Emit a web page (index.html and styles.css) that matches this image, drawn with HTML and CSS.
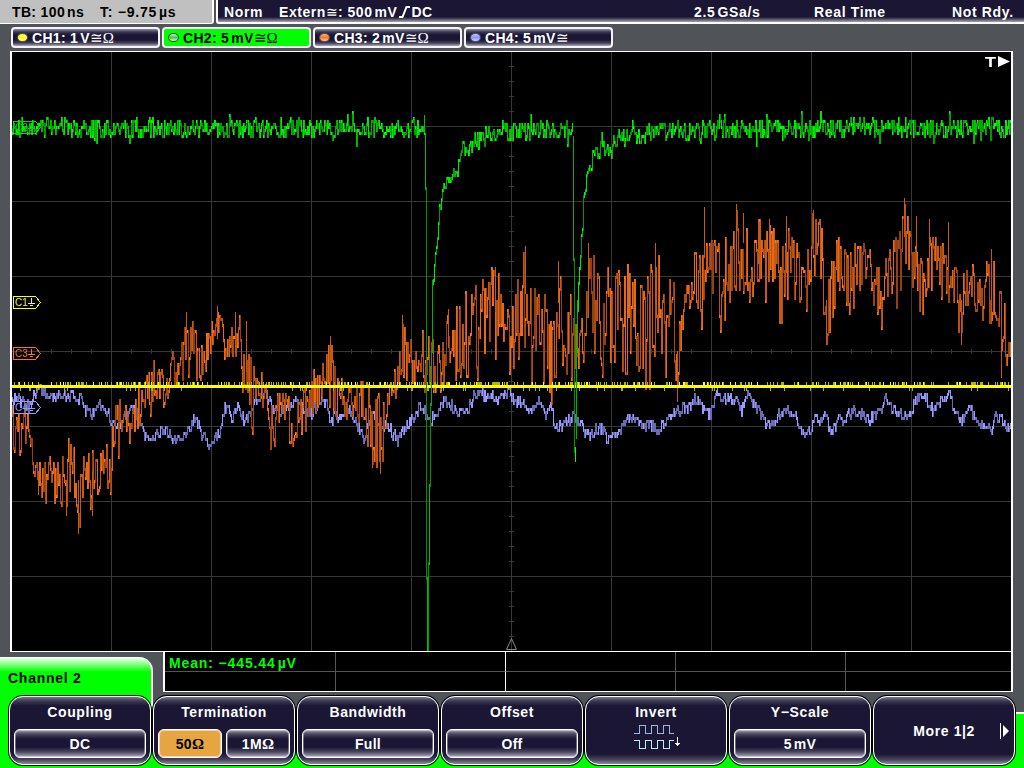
FILE: index.html
```html
<!DOCTYPE html>
<html lang="en">

<head>
  <meta charset="UTF-8">
  <meta name="viewport" content="width=device-width, initial-scale=1.0">
  <title>Oscilloscope</title>
  <link rel="stylesheet" href="styles.css">
</head>

<body>
  <div class="screen">
    <header class="topbar">
      <div class="timebase">
        <span>TB: 100<i></i>ns</span>
        <span>T: −9.75<i></i>µs</span>
      </div>
      <div class="status">
        <span>Norm</span>
        <span class="extern">Extern<b class="sym">≅</b>: 500<i></i>mV<svg class="edge" width="13" height="12" viewBox="0 0 13 12"><path d="M1 11H4.500L8.500 1H12" /></svg>DC</span>
        <span>2.5<i></i>GSa/s</span>
        <span>Real Time</span>
        <span class="state">Not Rdy.</span>
      </div>
    </header>

    <div class="channels">
      <div class="chip ch1"><em></em>CH1: 1<i></i>V<b class="sym">≅Ω</b></div>
      <div class="chip ch2 active"><em></em>CH2: 5<i></i>mV<b class="sym">≅Ω</b></div>
      <div class="chip ch3"><em></em>CH3: 2<i></i>mV<b class="sym">≅Ω</b></div>
      <div class="chip ch4"><em></em>CH4: 5<i></i>mV<b class="sym">≅</b></div>
    </div>

    <main class="plot">
      <canvas id="scope" width="999" height="599"></canvas>
      <svg class="markers" width="999" height="599" viewBox="12 52 999 599">
        <g class="marker yellow">
          <path d="M13.500 296.500H35.500L40.500 302.500L35.500 308.500H13.500Z" />
          <text x="15" y="306">C1</text>
          <path d="M31.500 298V303M28 303.500H35M30 305.500H33" />
        </g>
        <g class="marker green">
          <path d="M13.500 121.500H35.500L40.500 127.500L35.500 133.500H13.500Z" />
          <text x="15" y="131">C2</text>
          <path d="M31.500 123V128M28 128.500H35M30 130.500H33" />
        </g>
        <g class="marker orange">
          <path d="M13.500 347.500H35.500L40.500 353.500L35.500 359.500H13.500Z" />
          <text x="15" y="357">C3</text>
          <path d="M31.500 349V354M28 354.500H35M30 356.500H33" />
        </g>
        <g class="marker violet">
          <path d="M13.500 401.500H35.500L40.500 407.500L35.500 413.500H13.500Z" />
          <text x="15" y="411">C4</text>
          <path d="M31.500 403V408M28 408.500H35M30 410.500H33" />
        </g>
        <path class="trigger-pos" d="M511.500 638.500L506.500 649.500H516.500Z" />
        <text class="trigger-t" x="985" y="67" textLength="11" lengthAdjust="spacingAndGlyphs">T</text>
        <path class="trigger-arrow" d="M998 56L1010 61.500L998 67Z" />
      </svg>
    </main>

    <section class="bottom">
      <div class="readout">
        <div class="tab">Channel 2</div>
        <div class="measure">
          <div class="value">Mean: −445.44<i></i>µV</div>
          <div></div>
          <div></div>
          <div></div>
          <div></div>
          <div></div>
          <div></div>
          <div></div>
          <div></div>
          <div></div>
        </div>
      </div>
      <nav class="menu">
        <div class="key">
          <h2>Coupling</h2>
          <div class="fields"><span>DC</span></div>
        </div>
        <div class="key">
          <h2>Termination</h2>
          <div class="fields"><span class="on">50<b class="ohm">Ω</b></span><span>1M<b class="ohm">Ω</b></span></div>
        </div>
        <div class="key">
          <h2>Bandwidth</h2>
          <div class="fields"><span>Full</span></div>
        </div>
        <div class="key">
          <h2>Offset</h2>
          <div class="fields"><span>Off</span></div>
        </div>
        <div class="key">
          <h2>Invert</h2>
          <svg class="invert" width="48" height="26" viewBox="0 0 48 26">
            <path class="up" d="M0 9.500H5.500V1.500H11.500V9.500H17.500V1.500H23.500V9.500H29.500V1.500H35.500V9.500H40" />
            <path class="down" d="M0 16.500H5.500V24.500H11.500V16.500H17.500V24.500H23.500V16.500H29.500V24.500H35.500V16.500H40" />
            <path class="arrow" d="M43.500 13V22M41 19.500H46M42 20.500H45" />
          </svg>
        </div>
        <div class="key">
          <h2>Y−Scale</h2>
          <div class="fields"><span>5<i></i>mV</span></div>
        </div>
        <div class="key more">
          <h2>More 1|2</h2>
          <svg width="10" height="16" viewBox="0 0 10 16"><path d="M0 0H1V16H0ZM3 2L9 8L3 14Z" /></svg>
        </div>
      </nav>
    </section>
  </div>

  <script src="scope.js"></script>
</body>

</html>
```
FILE: styles.css
```css
* {
  box-sizing: border-box;
}

body {
  margin: 0;
  background-color: #505458;
  font-family: "Liberation Sans", Arial, sans-serif;
  font-size: 14px;
  font-weight: bold;
  letter-spacing: 0.5px;
  color: white;
}

.screen {
  width: 1024px;
  height: 768px;
  overflow: hidden;
  background-color: #505458;
}

/* thin space between number and unit */
i {
  display: inline-block;
  width: 2px;
}

.topbar {
  display: flex;
  gap: 2px;
  height: 24px;
  line-height: 24px;
  white-space: nowrap;
}

.timebase {
  display: flex;
  width: 214px;
  padding-left: 12px;
  letter-spacing: 0.35px;
  color: black;
  background-color: #c0c0c0;
  border-right: 2px solid white;
  border-bottom: 1px solid white;
  border-bottom-right-radius: 3px;
}

.timebase span:first-child {
  width: 88px;
}

.timebase span:last-child {
  letter-spacing: 0.75px;
}

.status {
  flex: 1;
  display: grid;
  grid-template-columns: 55px 415px 120px 138px 64px;
  padding-left: 6px;
  border-left: 2px solid white;
  border-bottom: 2px solid white;
  border-bottom-left-radius: 3px;
  background: linear-gradient(#1a1633 17px, #4c4960 19px, #aaa8b4 22px);
}

.status span {
  letter-spacing: 0.65px;
}

.status .extern {
  letter-spacing: 0.55px;
}

.sym {
  font-weight: normal;
  font-family: "Liberation Serif", "DejaVu Serif", serif;
  font-size: 15px;
  letter-spacing: 0;
}

.extern .sym {
  font-size: 14px;
  line-height: 1;
}

.edge {
  margin-left: 1px;
  vertical-align: -1px;
  fill: none;
  stroke: white;
  stroke-width: 2;
}

.channels {
  display: flex;
  gap: 2px;
  height: 27px;
  padding: 3px 0 0 11px;
}

.chip {
  display: flex;
  align-items: center;
  width: 149px;
  height: 21px;
  padding-left: 4px;
  border: 2px solid #f4f4f8;
  border-radius: 4px;
  letter-spacing: 0.3px;
  white-space: pre;
  background: linear-gradient(#8f8da0, #3a3752 3px, #1a1633 6px, #1a1633 11px, #444158 14px, #aaa8b8);
}

.chip.active {
  color: black;
  background: #00ff00;
}

.chip em {
  width: 11px;
  height: 9px;
  margin-right: 4px;
  border: 1px solid #55536a;
  border-radius: 50%;
}

.ch1 em {
  background: linear-gradient(#ffff60, #ffff00, #ffffa0);
}

.ch2 em {
  border-color: #205820;
  background: linear-gradient(#d0f0d0, #50c050, #e0f8e0);
}

.ch3 em {
  background: linear-gradient(#ffb080, #ff7518, #ffc8a0);
}

.ch4 em {
  background: linear-gradient(#c8c8ff, #9090ff, #d0d0ff);
}

.plot {
  position: relative;
  width: 1003px;
  height: 601px;
  margin-left: 10px;
  border: 1px solid white;
  border-width: 1px 2px;
  background-color: black;
}

.plot canvas {
  display: block;
}

.markers {
  position: absolute;
  left: 0;
  top: 0;
}

.marker path {
  fill: none;
  shape-rendering: crispEdges;
}

.marker text {
  font-size: 10px;
  font-weight: normal;
  letter-spacing: 0;
}

.yellow {
  stroke: #ffff00;
}

.green {
  stroke: #00e000;
}

.orange {
  stroke: #ff7518;
}

.violet {
  stroke: #9898ff;
}

.marker text {
  stroke: none;
}

.yellow text {
  fill: #ffff00;
}

.green text {
  fill: #00e000;
}

.orange text {
  fill: #ff7518;
}

.violet text {
  fill: #9898ff;
}

.trigger-pos {
  fill: none;
  stroke: #888;
}

.trigger-t {
  font-size: 15px;
  letter-spacing: 0;
  fill: white;
}

.trigger-arrow {
  fill: white;
}

.bottom {
  height: 116px;
  background: linear-gradient(#505458 60px, white 60px, white 62px, #00ff00 62px);
}

.readout {
  display: flex;
  height: 40px;
}

.tab {
  width: 153px;
  height: 57px;
  margin: 5px 10px 0 0;
  padding: 13px 0 0 8px;
  letter-spacing: 0.75px;
  color: black;
  background: linear-gradient(white, #00ff00 15px);
  border-right: 2px solid white;
  border-top-right-radius: 14px;
}

.measure {
  display: grid;
  grid-template-columns: 171px 170px 170px 170px 1fr;
  grid-template-rows: 20px 19px;
  width: 850px;
  border: 0 solid white;
  border-width: 0 2px 1px;
  background-color: black;
}

.measure div {
  border-right: 1px solid #555;
}

.measure div:nth-child(-n + 5) {
  border-bottom: 1px solid #555;
}

.measure div:nth-child(5n + 2) {
  border-right-color: white;
}

.measure div:nth-child(5n) {
  border-right: none;
}

.measure .value {
  padding: 3px 0 0 4px;
  letter-spacing: 0.87px;
  color: #00ff00;
  white-space: nowrap;
}

.menu {
  display: flex;
  gap: 2px;
  padding: 4px 0 0 9px;
}

.key {
  display: flex;
  flex-direction: column;
  align-items: center;
  width: 142px;
  height: 69px;
  padding: 7px 4px 0;
  border: 1px solid white;
  border-radius: 14px;
  box-shadow: 0 0 0 1px black;
  background: linear-gradient(#77758a, #3c3a52 4px, #1a1633 9px, #1a1633 57px, #4a4860 63px, #8c8a9c);
}

.key h2 {
  margin: 0;
  font-size: 14px;
  line-height: 17px;
  letter-spacing: 0.6px;
}

.fields {
  display: flex;
  gap: 4px;
  align-self: stretch;
  margin-top: 8px;
}

.fields span {
  flex: 1;
  height: 29px;
  line-height: 29px;
  text-align: center;
  letter-spacing: 0.3px;
  border: 1px solid white;
  border-radius: 6px;
  box-shadow: inset 0 0 0 1px rgba(255, 255, 255, 0.35);
  background: linear-gradient(#a5a3b2, #4a4760 4px, #1a1633 9px, #1a1633 17px, #4a4760 22px, #b0aebc);
}

.fields .on {
  color: black;
  background: #e6a540;
  box-shadow: inset 0 0 0 1px #f4d4a4;
}

.ohm {
  font-family: "Liberation Serif", serif;
  font-size: 15px;
  line-height: 1;
}

.invert {
  margin-top: 3px;
  margin-left: 4px;
  fill: none;
  shape-rendering: crispEdges;
}

.up {
  stroke: #9cb4e8;
}

.down {
  stroke: #b8ecff;
}

.arrow {
  stroke: white;
}

.more {
  flex-direction: row;
  justify-content: flex-end;
  padding-top: 1px;
}

.more h2 {
  margin-right: 25px;
  letter-spacing: 0.6px;
}

.more svg {
  fill: white;
}
```
FILE: scope.js
```js
const ctx = document.getElementById('scope').getContext('2d');
// work in screen coordinates, plot starts at 12,52
ctx.translate(-12, -52);

let seed = 4711;
function rnd() {
  seed = (seed * 1103515245 + 12345) % 2147483648;
  return (seed >> 8) / 8388608;
}

// x, y pairs
const violet = [12,397,20,400,25,407,30,403,35,391,40,388,46,393,55,397,65,394,72,395,80,397,84,408,90,413,
  97,405,103,403,108,413,115,428,120,425,125,413,132,406,137,412,142,431,147,440,155,435,160,428,167,431,
  173,440,180,440,187,430,195,416,200,430,208,443,214,438,220,430,223,408,228,410,232,417,237,405,243,419,
  248,417,255,400,262,390,268,397,272,408,283,410,290,407,297,395,302,406,310,412,318,403,325,400,331,422,
  334,410,340,418,347,405,355,420,363,436,372,415,380,423,388,425,397,440,405,427,412,418,420,405,430,418,
  436,415,440,400,448,400,455,410,467,409,472,396,480,390,485,396,490,392,495,402,502,395,508,391,515,400,
  522,400,530,410,538,398,545,412,550,408,556,427,565,423,573,413,580,425,587,434,597,427,603,430,607,437,
  617,435,624,420,633,415,640,425,650,424,658,431,667,414,672,412,680,408,690,405,694,397,702,407,710,412,
  716,393,725,398,735,400,741,410,747,395,755,405,765,420,772,424,778,413,785,407,795,416,803,432,810,430,
  814,415,820,420,825,415,830,430,838,419,845,418,852,410,860,412,866,419,875,413,880,408,885,392,892,408,
  900,412,908,415,915,396,925,395,933,410,940,398,948,394,955,410,960,420,968,410,975,413,982,425,990,430,
  995,415,1002,420,1011,427];

// x, upper limit, lower limit
const orange = [12,390,443,18,415,465,23,390,440,30,430,450,36,445,490,43,440,510,50,450,490,57,460,505,
  63,440,510,70,440,495,78,470,530,85,440,480,92,450,515,98,445,490,110,440,490,112,405,440,118,400,455,
  123,400,420,129,410,455,137,385,430,142,385,410,150,370,430,153,350,390,157,365,395,163,362,405,
  171,350,385,177,360,385,187,315,370,195,325,375,203,340,375,210,325,350,218,308,335,226,335,360,
  236,312,360,242,320,385,247,345,390,252,350,430,258,375,405,267,365,425,271,400,450,280,390,425,
  293,400,445,305,380,430,313,370,430,320,370,415,330,340,410,340,375,415,350,385,430,365,380,430,
  372,390,465,380,390,470,388,385,420,395,370,395,402,315,370,408,340,385,417,330,385,432,340,390,
  448,310,380,460,300,375,475,290,375,490,270,355,495,268,355,505,300,355,511,310,390,525,245,340,
  530,280,385,535,278,360,545,290,380,553,320,405,558,262,355,563,300,395,570,290,375,580,300,380,
  588,245,335,598,270,370,608,270,370,620,275,370,632,260,370,640,280,370,648,265,385,655,244,340,
  665,285,370,672,280,335,677,310,400,680,330,382,683,280,315,690,280,335,696,240,300,702,255,330,
  704,208,270,712,220,295,720,245,325,730,235,305,736,205,280,742,215,315,752,250,300,758,220,280,
  765,225,320,770,220,265,775,240,315,785,235,320,790,225,280,795,245,305,805,255,310,813,212,290,
  821,225,290,826,290,340,832,235,320,840,240,295,850,245,315,860,235,290,868,240,265,875,255,315,
  882,275,330,888,245,300,897,240,305,904,200,255,913,240,290,920,255,320,927,225,285,937,235,290,
  945,240,300,952,260,310,961,275,340,965,250,300,972,265,315,980,270,320,990,250,335,1000,290,340,
  1005,310,370,1011,320,350];

// single peaks of channel 3: x, from, to
const peaks = [78,480,531,38,470,493,66,480,513,92,470,513,186,313,355,217,307,335,235,313,350,246,320,370,
  330,337,375,372,420,465,380,420,471,402,316,350,448,310,345,495,268,310,525,247,290,558,262,300,
  588,244,300,655,244,300,677,350,399,704,208,255,736,205,260,743,214,240,758,220,260,769,220,250,786,217,270,
  813,211,240,826,300,343,904,199,235,916,217,265,929,220,255,948,223,265,961,300,343,991,250,320,1001,340,376];

// center line of channel 2 between the pulses
const greenParts = [
  [12,128,425,128],
  [433,282,434,263,436,250,438,220,440,203,442,188,446,182,450,178,454,172,457,160,461,150,470,147,475,141,
    482,137,490,133,500,130,511,131,530,130,573,128],
  [577,310,578,285,580,254,582,223,583,202,586,181,589,165,592,158,596,156,600,150,610,143,620,138,630,135,
    650,132,680,130,720,130,800,129,860,127,1011,128]
];

function lookup(list, x, step, offset) {
  for (let i = step; i < list.length; i += step) {
    if (x <= list[i]) {
      const t = (x - list[i - step]) / (list[i] - list[i - step]);
      return list[i - step + offset] + t * (list[i + offset] - list[i - step + offset]);
    }
  }
  return list[list.length - step + offset];
}

function snap(y) {
  return Math.round(y / 3) * 3;
}

function bar(x, a, b, color) {
  ctx.fillStyle = color;
  ctx.fillRect(x, Math.min(a, b), 1, Math.abs(b - a) + 3);
}

function drawGrid() {
  ctx.fillStyle = '#373737';
  for (let x = 111; x < 1011; x += 100) ctx.fillRect(x, 52, 1, 599);
  for (let y = 126; y < 651; y += 75) ctx.fillRect(12, y, 999, 1);
  for (let x = 31; x < 1011; x += 20) ctx.fillRect(x, 349, 1, 5);
  for (let y = 66; y < 651; y += 15) ctx.fillRect(509, y, 5, 1);
}

function drawViolet() {
  let last = 397;
  for (let x = 12; x < 1011; x++) {
    const y = snap(lookup(violet, x, 2, 1) + (rnd() - 0.5) * 11);
    bar(x, last, y, rnd() < 0.4 ? '#9898ff' : '#6a6ab4');
    last = y;
  }
}

function drawOrange() {
  const colors = ['#e86814', '#c85a10', '#a84a12', '#b85010', '#964010'];
  let last = 405;
  let up = false;
  for (let x = 12; x < 1011; x++) {
    const size = (lookup(orange, x, 3, 2) - lookup(orange, x, 3, 1)) * 1.15;
    const top = lookup(orange, x, 3, 1) - size * 0.06;
    const low = top + size;
    // mostly swings from one half of the band to the other
    if (rnd() < 0.55) up = !up;
    const y = snap(up ? top + size * 0.5 * rnd() : low - size * 0.5 * rnd());
    bar(x, last, y, colors[Math.floor(rnd() * 5)]);
    if (rnd() < 0.3) bar(x, y, y, '#ff7518');
    last = y;
  }
  for (let i = 0; i < peaks.length; i += 3) {
    bar(peaks[i], snap(peaks[i + 1]), snap(peaks[i + 2]), '#c85a10');
  }
}

function drawYellow() {
  for (let x = 12; x < 1011; x++) {
    if (rnd() < 0.33) bar(x, 382, 382, rnd() < 0.3 ? '#ffff00' : '#b4b400');
    if (rnd() < 0.06) bar(x, 388, 388, '#b4b400');
  }
  ctx.fillStyle = '#ffff00';
  ctx.fillRect(12, 385, 999, 3);
}

function drawGreen() {
  const colors = ['#00e800', '#00c000', '#009800', '#00a800'];
  greenParts.forEach(part => {
    let last = part[1];
    for (let x = part[0]; x < part[part.length - 2]; x++) {
      const steep = lookup(part, x, 2, 1) > 165;
      let noise = (rnd() - 0.5) * (steep ? 10 : 18);
      if (rnd() < 0.07) noise *= 1.9;
      const y = snap(lookup(part, x, 2, 1) + noise - 1);
      bar(x, last, y, colors[Math.floor(rnd() * 4)]);
      if (rnd() < 0.3) bar(x, y, y, '#00ff00');
      last = y;
    }
  });
  // first pulse, clipped at the bottom
  bar(424, 115, 130, '#00c000');
  bar(425, 133, 187, '#00c000');
  bar(426, 187, 577, '#009000');
  bar(427, 577, 651, '#00c000');
  bar(428, 562, 651, '#009800');
  bar(429, 484, 562, '#00c000');
  bar(430, 403, 484, '#009800');
  bar(431, 350, 403, '#00b000');
  bar(432, 280, 350, '#00b000');
  // second pulse
  bar(573, 136, 258, '#00b000');
  bar(574, 258, 450, '#009000');
  bar(575, 447, 459, '#00ff00');
  bar(576, 350, 436, '#00b000');
  bar(577, 300, 350, '#00c000');
}

drawGrid();
drawViolet();
drawOrange();
drawYellow();
drawGreen();
```
